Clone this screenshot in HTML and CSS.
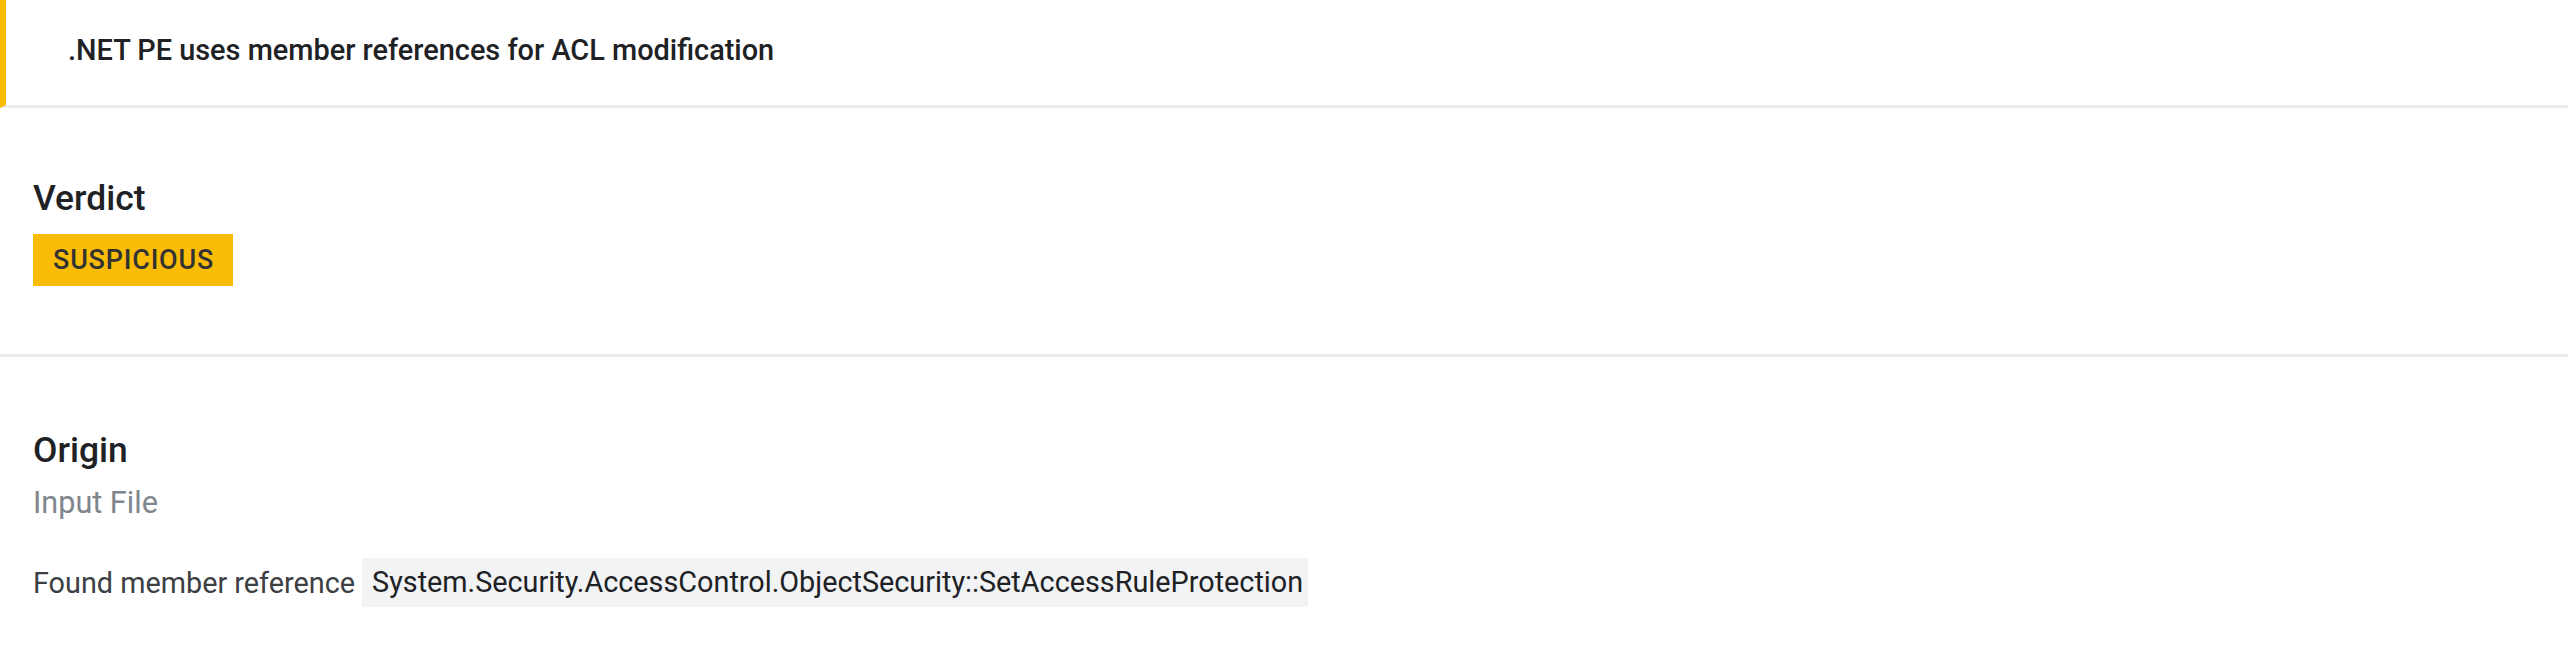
FILE: index.html
```html
<!DOCTYPE html>
<html lang="en">
<head>
<meta charset="utf-8">
<title>Signature detail</title>
<link rel="stylesheet" href="styles.css">
</head>
<body>
<div class="panel">
  <div class="header">
    <span class="header-title">.NET PE uses member references for ACL modification</span>
  </div>
  <section class="section verdict">
    <h3 class="heading">Verdict</h3>
    <span class="badge">SUSPICIOUS</span>
  </section>
  <section class="section origin">
    <h3 class="heading">Origin</h3>
    <div class="subtext">Input File</div>
    <div class="detail-row">
      <span class="detail-label">Found member reference</span>
      <span class="code">System.Security.AccessControl.ObjectSecurity::SetAccessRuleProtection</span>
    </div>
  </section>
</div>
</body>
</html>
```

FILE: styles.css
```css
html, body {
  margin: 0;
  padding: 0;
  background: #ffffff;
}
body {
  font-family: Roboto, "Liberation Sans", sans-serif;
  color: #202124;
  font-size: 28.8px;
}
.panel {
  display: flex;
  flex-direction: column;
}
.header {
  height: 99px;
  display: flex;
  align-items: center;
  border-left: 6px solid #fbbc05;
  border-bottom: 3px solid #ebebeb;
  padding-left: 62px;
  padding-bottom: 6px;
}
.header-title {
  font-size: 28.9px;
  font-weight: 500;
  color: #202124;
}
.section {
  display: flex;
  flex-direction: column;
  align-items: flex-start;
  padding: 0 33px;
}
.verdict {
  padding-top: 70px;
  padding-bottom: 68px;
  border-bottom: 3px solid #ebebeb;
}
.origin {
  padding-top: 73px;
}
.heading {
  margin: 0;
  font-size: 35.4px;
  line-height: 40px;
  font-weight: 500;
  color: #202124;
}
.badge {
  margin-top: 16px;
  height: 52px;
  line-height: 52px;
  padding: 0 19px 0 20px;
  background: #fbbc05;
  color: #333333;
  font-size: 27px;
  letter-spacing: 0.8px;
  font-weight: 500;
}
.subtext {
  margin-top: 14px;
  font-size: 30.6px;
  line-height: 37px;
  color: #80868b;
}
.detail-row {
  margin-top: 37px;
  display: flex;
  align-items: center;
  gap: 7px;
  font-size: 28.8px;
  color: #3c4043;
}
.code {
  background: #f1f3f4;
  padding: 0 5px 0 10px;
  height: 49px;
  line-height: 49px;
  color: #202124;
}
```
